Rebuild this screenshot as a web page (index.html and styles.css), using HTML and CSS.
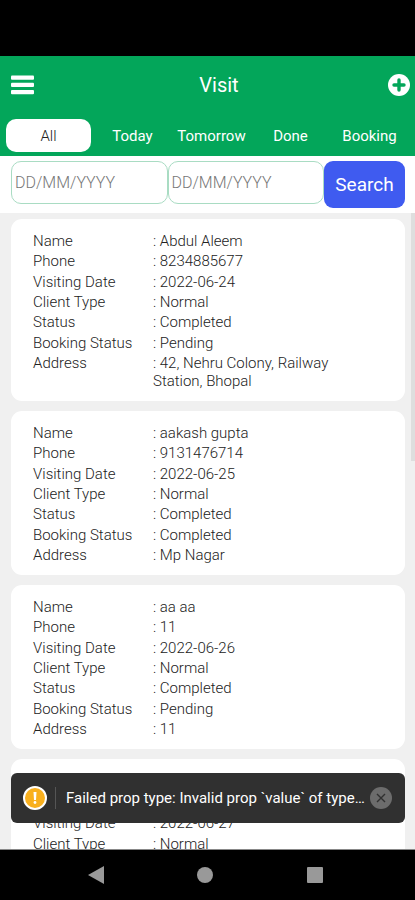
FILE: index.html
```html
<!DOCTYPE html>
<html lang="en">
<head>
<meta charset="utf-8">
<meta name="viewport" content="width=device-width, initial-scale=1">
<title>Visit</title>
<link rel="stylesheet" href="styles.css">
</head>
<body>
<div class="status-bar"></div>
<header class="header">
  <div class="title-row">
    <button class="icon-button menu" aria-label="Menu">
      <svg width="24" height="20" viewBox="0 0 24 20" fill="#fff"><rect x="0" y="0.5" width="23" height="4.2" rx="1"/><rect x="0" y="7.7" width="23" height="4.2" rx="1"/><rect x="0" y="15" width="23" height="4.2" rx="1"/></svg>
    </button>
    <h1 class="title">Visit</h1>
    <button class="icon-button add" aria-label="Add visit">
      <svg width="24" height="24" viewBox="0 0 24 24"><circle cx="12" cy="12" r="11" fill="#fff"/><path d="M12 7v10M7 12h10" stroke="#03a65a" stroke-width="3.4" stroke-linecap="round"/></svg>
    </button>
  </div>
  <nav class="tabs">
    <button class="tab active">All</button>
    <button class="tab">Today</button>
    <button class="tab">Tomorrow</button>
    <button class="tab">Done</button>
    <button class="tab">Booking</button>
  </nav>
</header>
<form class="search">
  <input class="date" type="text" aria-label="From date" placeholder="DD/MM/YYYY">
  <input class="date" type="text" aria-label="To date" placeholder="DD/MM/YYYY">
  <button class="search-button" type="button">Search</button>
</form>
<main class="list">
  <dl class="card card-long">
    <dt>Name</dt><dd>: Abdul Aleem</dd>
    <dt>Phone</dt><dd>: 8234885677</dd>
    <dt>Visiting Date</dt><dd>: 2022-06-24</dd>
    <dt>Client Type</dt><dd>: Normal</dd>
    <dt>Status</dt><dd>: Completed</dd>
    <dt>Booking Status</dt><dd>: Pending</dd>
    <dt>Address</dt><dd>: 42, Nehru Colony, Railway Station, Bhopal</dd>
  </dl>
  <dl class="card">
    <dt>Name</dt><dd>: aakash gupta</dd>
    <dt>Phone</dt><dd>: 9131476714</dd>
    <dt>Visiting Date</dt><dd>: 2022-06-25</dd>
    <dt>Client Type</dt><dd>: Normal</dd>
    <dt>Status</dt><dd>: Completed</dd>
    <dt>Booking Status</dt><dd>: Completed</dd>
    <dt>Address</dt><dd>: Mp Nagar</dd>
  </dl>
  <dl class="card">
    <dt>Name</dt><dd>: aa aa</dd>
    <dt>Phone</dt><dd>: 11</dd>
    <dt>Visiting Date</dt><dd>: 2022-06-26</dd>
    <dt>Client Type</dt><dd>: Normal</dd>
    <dt>Status</dt><dd>: Completed</dd>
    <dt>Booking Status</dt><dd>: Pending</dd>
    <dt>Address</dt><dd>: 11</dd>
  </dl>
  <dl class="card card-last">
    <dt></dt><dd></dd>
    <dt></dt><dd></dd>
    <dt>Visiting Date</dt><dd>: 2022-06-27</dd>
    <dt>Client Type</dt><dd>: Normal</dd>
  </dl>
  <div class="scroll-thumb"></div>
  <div class="toast" role="alert">
    <svg class="warning" width="26" height="26" viewBox="0 0 26 26"><circle cx="13" cy="13" r="11" fill="#f9b01e" stroke="#fff" stroke-width="2"/><path d="M11.5 7h3l-.5 8h-2z" fill="#fff"/><circle cx="13" cy="17.5" r="1.4" fill="#fff"/></svg>
    <p class="toast-text">Failed prop type: Invalid prop `value` of type...</p>
    <button class="icon-button" aria-label="Dismiss">
      <svg width="22" height="22" viewBox="0 0 22 22"><circle cx="11" cy="11" r="11" fill="#6c6c6c"/><path d="M7 7l8 8M15 7l-8 8" stroke="#303030" stroke-width="1.4"/></svg>
    </button>
  </div>
</main>
<nav class="system-nav">
  <button class="icon-button" aria-label="Back"><svg width="18" height="20" viewBox="0 0 18 20"><path d="M17 1v18L1 10z" fill="#999"/></svg></button>
  <button class="icon-button" aria-label="Home"><svg width="18" height="18" viewBox="0 0 18 18"><circle cx="9" cy="9" r="8" fill="#999"/></svg></button>
  <button class="icon-button" aria-label="Recent apps"><svg width="18" height="18" viewBox="0 0 18 18"><rect x="1" y="1" width="16" height="16" rx="1" fill="#999"/></svg></button>
</nav>
</body>
</html>
```
FILE: styles.css
```css
* {
  box-sizing: border-box;
}

body {
  display: flex;
  flex-direction: column;
  height: 100vh;
  margin: 0;
  background: #f0f0f0;
  color: #222;
  font-family: Roboto, sans-serif;
  font-size: 15px;
  line-height: 18px;
}

button {
  padding: 0;
  border: 0;
  background: none;
  color: #fff;
  font: inherit;
}

.icon-button {
  display: flex;
  flex: none;
}

.status-bar {
  flex: none;
  height: 56px;
  background: #000;
}

.header {
  flex: none;
  background: #03a65a;
}

.title-row {
  display: grid;
  grid-template-columns: 24px 1fr 24px;
  align-items: center;
  height: 58px;
  padding: 0 4px 0 11px;
}

.title {
  margin: 0;
  padding-left: 16px;
  color: #fff;
  font-size: 20px;
  font-weight: 400;
  line-height: 24px;
  text-align: center;
}

.tabs {
  display: grid;
  grid-template-columns: 85fr 83fr 75fr 83fr 75fr;
  padding: 5px 8px 4px 6px;
}

.tab {
  height: 33px;
  text-align: center;
  white-space: nowrap;
}

.tab.active {
  border-radius: 10px;
  background: #fff;
  color: #222;
  font-weight: 300;
}

.search {
  display: flex;
  flex: none;
  height: 57px;
  padding: 5px 10px 5px 11px;
  background: #fff;
}

.date {
  flex: 1;
  min-width: 0;
  height: 43px;
  padding: 0 3px;
  border: 1px solid #a9dcc3;
  border-radius: 10px;
  background: #fff;
  font: 300 16px/20px Roboto, sans-serif;
}

.date::placeholder {
  color: #777;
}

.search-button {
  width: 81px;
  height: 47px;
  border-radius: 9px;
  background: #3f5bf0;
  font-size: 19px;
}

.list {
  position: relative;
  flex: 1;
  display: flex;
  flex-direction: column;
  gap: 10px;
  min-height: 0;
  padding: 6px 10px 0 11px;
  overflow: hidden;
  border-bottom: 1px solid #888;
}

.card {
  display: grid;
  flex: none;
  grid-template-columns: 120px 1fr;
  grid-auto-rows: minmax(18px, auto);
  align-content: space-between;
  min-height: 164px;
  margin: 0;
  padding: 13px 40px 11px 22px;
  border-radius: 11px;
  background: #fff;
  font-weight: 300;
}

.card-long {
  min-height: 182px;
}

.card-last {
  align-content: start;
  row-gap: 3px;
}

.card dd {
  margin: 0;
}

.scroll-thumb {
  position: absolute;
  top: 0;
  right: 0;
  width: 4px;
  height: 248px;
  background: #dedede;
}

.toast {
  position: absolute;
  right: 10px;
  bottom: 26px;
  left: 11px;
  display: flex;
  align-items: center;
  height: 50px;
  padding: 0 13px 0 11px;
  border-radius: 6px;
  background: #303030;
  color: #fff;
}

.warning {
  flex: none;
}

.toast-text {
  flex: 1;
  min-width: 0;
  margin: 0 4px 0 7px;
  padding: 2px 0 2px 10px;
  border-left: 1px solid #555;
  overflow: hidden;
  text-overflow: ellipsis;
  white-space: nowrap;
}

.system-nav {
  display: flex;
  flex: none;
  align-items: center;
  justify-content: space-between;
  height: 50px;
  padding: 0 22% 0 21%;
  background: #000;
}
```
